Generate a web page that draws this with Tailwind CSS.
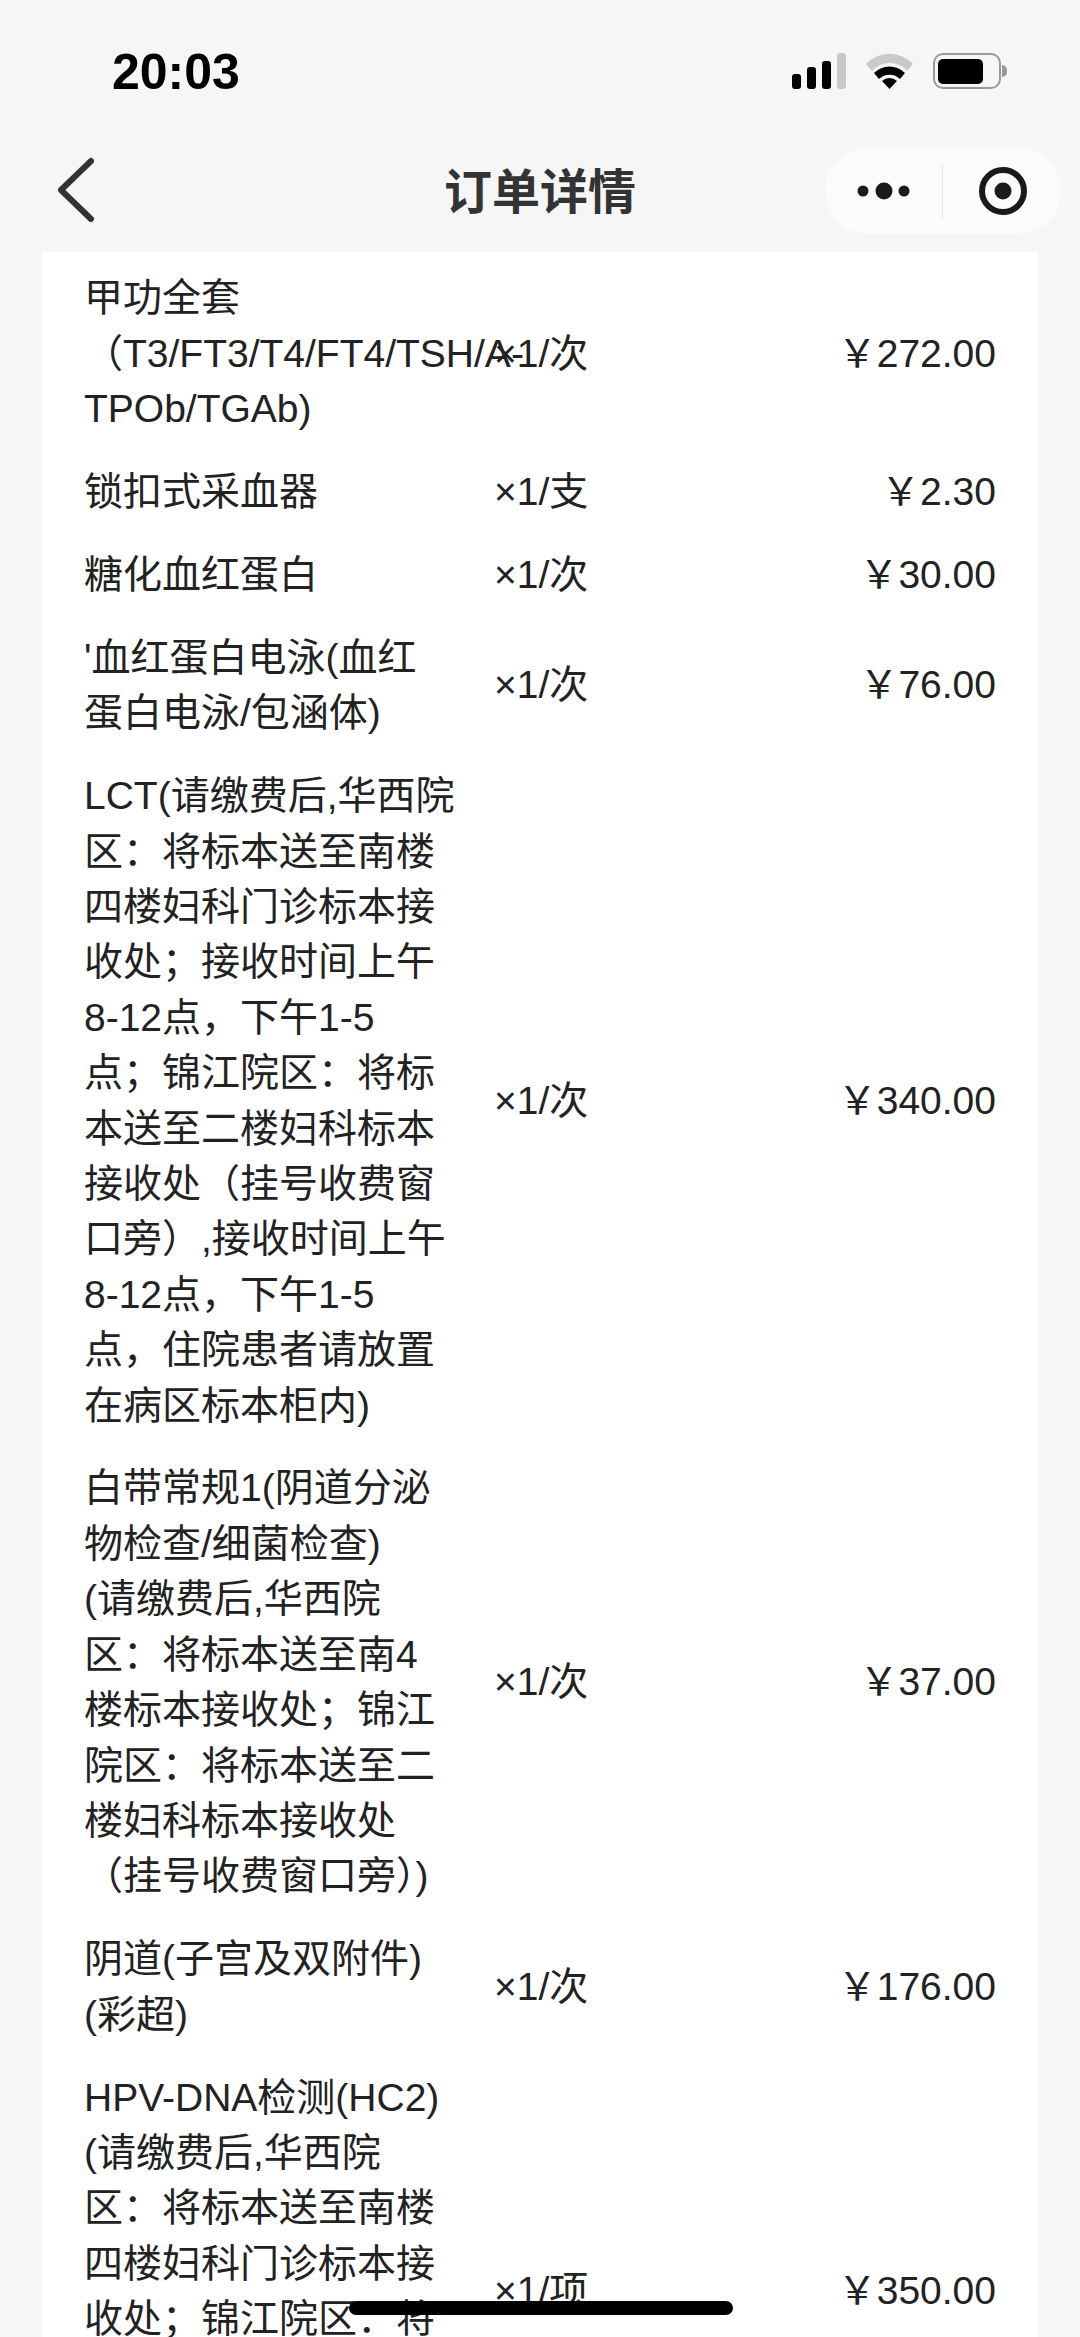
<!DOCTYPE html>
<html lang="zh-CN">
  <head>
    <meta charset="UTF-8" />
    <meta name="viewport" content="width=device-width, initial-scale=1.0" />
    <title>订单详情</title>
    <script src="https://cdn.jsdelivr.net/npm/@tailwindcss/browser@4"></script>
  </head>
  <body class="bg-[#f6f6f6]">
    <div class="relative h-[2337px] w-[1080px] overflow-hidden bg-[#f6f6f6] text-[#222222] font-['Liberation_Sans','Noto_Sans_CJK_SC',sans-serif]">
      <!-- STATUS BAR -->
      <header class="flex h-[148px] items-start justify-between pl-[112px] pr-[73px] pt-[44px]">
        <span class="text-[50px] leading-[56px] font-bold text-black">20:03</span>
        <div class="mt-[9px] flex items-center gap-[20px]">
          <svg width="54" height="36" viewBox="0 0 54 36">
            <rect x="0" y="21" width="9" height="15" rx="3" fill="#000" />
            <rect x="15" y="14" width="9" height="22" rx="3" fill="#000" />
            <rect x="30" y="8" width="9" height="28" rx="3" fill="#000" />
            <rect x="45" y="0" width="9" height="36" rx="3" fill="#c9c9c9" />
          </svg>
          <svg width="47" height="36" viewBox="0 0 47 36">
            <path d="M0 11 A32 32 0 0 1 47 11 L41 18 A23 23 0 0 0 6 18 Z" fill="#c9c9c9" />
            <path d="M8 20 A22 22 0 0 1 39 20 L34 26 A15 15 0 0 0 13 26 Z" fill="#000" />
            <path d="M16 28 A11 11 0 0 1 31 28 L23.5 36 Z" fill="#000" />
          </svg>
          <div class="flex items-center">
            <div class="flex h-[36px] w-[68px] items-center rounded-[10px] border-2 border-[#999999] pl-[3px]">
              <div class="h-[25px] w-[45px] rounded-[5px] bg-black"></div>
            </div>
            <div class="ml-[1px] h-[12px] w-[5px] rounded-r-full bg-[#999999]"></div>
          </div>
        </div>
      </header>

      <!-- NAV BAR -->
      <nav class="relative flex h-[104px] items-start justify-between pl-[56px] pr-[19px]">
        <svg class="mt-[9px]" width="40" height="66" viewBox="0 0 40 66">
          <path d="M35 4 L5 33 L35 62" fill="none" stroke="#333333" stroke-width="6" stroke-linecap="round" stroke-linejoin="round" />
        </svg>
        <h1 class="absolute left-0 right-0 top-[17px] text-center text-[48px] leading-[56px] font-semibold text-[#333333]">订单详情</h1>
        <div class="flex h-[86px] w-[236px] items-center rounded-[43px] bg-[#fbfbfb]">
          <svg class="ml-[32px]" width="54" height="20" viewBox="0 0 54 20">
            <circle cx="6" cy="10" r="5.5" fill="#1a1a1a" />
            <circle cx="27" cy="10" r="8.5" fill="#1a1a1a" />
            <circle cx="47" cy="10" r="5.5" fill="#1a1a1a" />
          </svg>
          <div class="ml-[31px] h-[55px] w-px bg-[#e8e8e8]"></div>
          <svg class="ml-[36px]" width="48" height="48" viewBox="0 0 48 48">
            <circle cx="24" cy="24" r="21" fill="none" stroke="#1a1a1a" stroke-width="6" />
            <circle cx="24" cy="24" r="8.5" fill="#1a1a1a" />
          </svg>
        </div>
      </nav>

      <!-- ORDER ITEMS -->
      <main class="mx-[42px] bg-white pt-[4.5px] text-[39px] leading-[55.4px]">
        <div class="flex items-center py-[13.75px] pl-[42px] pr-[42px]">
          <div class="w-[410px] shrink-0 whitespace-nowrap">甲功全套<br />（T3/FT3/T4/FT4/TSH/A-<br />TPOb/TGAb)</div>
          <div class="relative">×1/次</div>
          <div class="ml-auto">￥272.00</div>
        </div>
        <div class="flex items-center py-[13.75px] pl-[42px] pr-[42px]">
          <div class="w-[410px] shrink-0 whitespace-nowrap">锁扣式采血器</div>
          <div>×1/支</div>
          <div class="ml-auto">￥2.30</div>
        </div>
        <div class="flex items-center py-[13.75px] pl-[42px] pr-[42px]">
          <div class="w-[410px] shrink-0 whitespace-nowrap">糖化血红蛋白</div>
          <div>×1/次</div>
          <div class="ml-auto">￥30.00</div>
        </div>
        <div class="flex items-center py-[13.75px] pl-[42px] pr-[42px]">
          <div class="w-[410px] shrink-0 whitespace-nowrap">'血红蛋白电泳(血红<br />蛋白电泳/包涵体)</div>
          <div>×1/次</div>
          <div class="ml-auto">￥76.00</div>
        </div>
        <div class="flex items-center py-[13.75px] pl-[42px] pr-[42px]">
          <div class="w-[410px] shrink-0 whitespace-nowrap">LCT(请缴费后,华西院<br />区：将标本送至南楼<br />四楼妇科门诊标本接<br />收处；接收时间上午<br />8-12点，下午1-5<br />点；锦江院区：将标<br />本送至二楼妇科标本<br />接收处（挂号收费窗<br />口旁）,接收时间上午<br />8-12点，下午1-5<br />点，住院患者请放置<br />在病区标本柜内)</div>
          <div>×1/次</div>
          <div class="ml-auto">￥340.00</div>
        </div>
        <div class="flex items-center py-[13.75px] pl-[42px] pr-[42px]">
          <div class="w-[410px] shrink-0 whitespace-nowrap">白带常规1(阴道分泌<br />物检查/细菌检查)<br />(请缴费后,华西院<br />区：将标本送至南4<br />楼标本接收处；锦江<br />院区：将标本送至二<br />楼妇科标本接收处<br />（挂号收费窗口旁）)</div>
          <div>×1/次</div>
          <div class="ml-auto">￥37.00</div>
        </div>
        <div class="flex items-center py-[13.75px] pl-[42px] pr-[42px]">
          <div class="w-[410px] shrink-0 whitespace-nowrap">阴道(子宫及双附件)<br />(彩超)</div>
          <div>×1/次</div>
          <div class="ml-auto">￥176.00</div>
        </div>
        <div class="flex items-center py-[13.75px] pl-[42px] pr-[42px]">
          <div class="w-[410px] shrink-0 whitespace-nowrap">HPV-DNA检测(HC2)<br />(请缴费后,华西院<br />区：将标本送至南楼<br />四楼妇科门诊标本接<br />收处；锦江院区：将<br />标本送至二楼妇科标<br />本接收处（挂号收费<br />窗口旁）)</div>
          <div>×1/项</div>
          <div class="ml-auto">￥350.00</div>
        </div>
      </main>

      <!-- HOME INDICATOR -->
      <div class="absolute left-[349px] top-[2301px] h-[14px] w-[384px] rounded-full bg-black"></div>
    </div>
  </body>
</html>
